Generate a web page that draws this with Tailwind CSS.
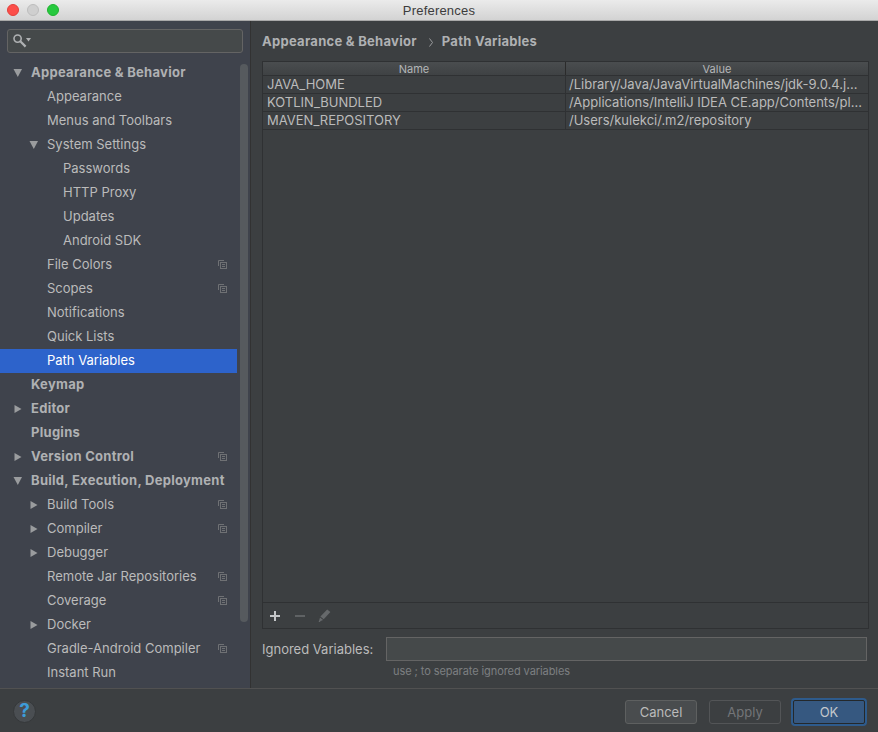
<!DOCTYPE html>
<html lang="en">
<head>
    <meta charset="UTF-8">
    <title>Preferences</title>
    <script src="https://cdn.jsdelivr.net/npm/@tailwindcss/browser@4"></script>
</head>
<body class="bg-[#3c3f41] font-['Inter','Liberation_Sans',sans-serif] text-[13px] text-[#bbbbbb] overflow-hidden">
<div class="w-[878px] h-[732px] flex flex-col overflow-hidden">

    <!-- Title bar -->
    <div class="h-[21px] shrink-0 flex items-center relative bg-gradient-to-b from-[#ebebeb] to-[#d3d3d3] border-b border-[#a9a9a9]">
        <div class="flex gap-[8px] pl-[7px]">
            <span class="w-3 h-3 rounded-full bg-[#fc4e49] border border-[#e2403b]"></span>
            <span class="w-3 h-3 rounded-full bg-[#cfcfcf] border border-[#bdbdbd]"></span>
            <span class="w-3 h-3 rounded-full bg-[#27c93f] border border-[#1fb32f]"></span>
        </div>
        <div class="absolute inset-x-0 top-0 text-center text-[13px] tracking-[0.2px] leading-[21px] text-[#3c3c3c] font-['Liberation_Sans',sans-serif]">Preferences</div>
    </div>

    <div class="h-[668px] shrink-0 flex border-b border-[#515151]">
        <!-- Sidebar -->
        <div class="w-[251px] shrink-0 bg-[#3f434c] border-r border-[#323232] relative">
            <div class="mx-[7px] mt-[8px] w-[236px] h-[24px] rounded-[3px] border border-[#646464] bg-[#45494a] flex items-center pl-[5px]">
                <svg width="19" height="14" viewBox="0 0 19 14" fill="none" stroke="#afb1b3"><circle cx="4.6" cy="4.6" r="3.6" stroke-width="1.6"/><path d="M7.3 7.3L12.6 12.6" stroke-width="2.2"/><path d="M13 4h5l-2.5 3.5z" fill="#afb1b3" stroke="none"/></svg>
            </div>

            <div class="mt-[8px] w-[237px] leading-[24px]">
                <div class="h-[24px] pb-[2px] flex items-center font-bold tracking-[0.28px] text-[#afb1b3]"><svg class="ml-[13px] mr-[8px] mt-[2px]" width="10" height="10" viewBox="0 0 10 10"><path d="M.5 1h8.5l-4.2 8z" fill="#9a9c9e"/></svg>Appearance &amp; Behavior</div>
                <div class="h-[24px] pb-[2px] flex items-center pl-[47px]">Appearance</div>
                <div class="h-[24px] pb-[2px] flex items-center pl-[47px]">Menus and Toolbars</div>
                <div class="h-[24px] pb-[2px] flex items-center"><svg class="ml-[29px] mr-[8px] mt-[2px]" width="10" height="10" viewBox="0 0 10 10"><path d="M.5 1h8.5l-4.2 8z" fill="#9a9c9e"/></svg>System Settings</div>
                <div class="h-[24px] pb-[2px] flex items-center pl-[63px]">Passwords</div>
                <div class="h-[24px] pb-[2px] flex items-center pl-[63px]">HTTP Proxy</div>
                <div class="h-[24px] pb-[2px] flex items-center pl-[63px]">Updates</div>
                <div class="h-[24px] pb-[2px] flex items-center pl-[63px]">Android SDK</div>
                <div class="h-[24px] pb-[2px] flex items-center justify-between pl-[47px] pr-[10px]">File Colors<svg width="9" height="9" viewBox="0 0 9 9" fill="none" stroke="#6f7174"><path d="M.5 6V.5H6"/><rect x="2.5" y="2.5" width="6" height="6"/><path d="M4 4.5h3M4 6.5h3"/></svg></div>
                <div class="h-[24px] pb-[2px] flex items-center justify-between pl-[47px] pr-[10px]">Scopes<svg width="9" height="9" viewBox="0 0 9 9" fill="none" stroke="#6f7174"><path d="M.5 6V.5H6"/><rect x="2.5" y="2.5" width="6" height="6"/><path d="M4 4.5h3M4 6.5h3"/></svg></div>
                <div class="h-[24px] pb-[2px] flex items-center pl-[47px]">Notifications</div>
                <div class="h-[24px] pb-[2px] flex items-center pl-[47px]">Quick Lists</div>
                <div class="h-[24px] pb-[2px] flex items-center pl-[47px] bg-[#2d63cb] text-white">Path Variables</div>
                <div class="h-[24px] pb-[2px] flex items-center pl-[31px] font-bold tracking-[0.28px] text-[#afb1b3]">Keymap</div>
                <div class="h-[24px] pb-[2px] flex items-center font-bold tracking-[0.28px] text-[#afb1b3]"><svg class="ml-[13px] mr-[8px] mt-[2px]" width="10" height="10" viewBox="0 0 10 10"><path d="M1.5 1l7 4-7 4z" fill="#9a9c9e"/></svg>Editor</div>
                <div class="h-[24px] pb-[2px] flex items-center pl-[31px] font-bold tracking-[0.28px] text-[#afb1b3]">Plugins</div>
                <div class="h-[24px] pb-[2px] flex items-center font-bold tracking-[0.28px] text-[#afb1b3] pr-[10px]"><svg class="ml-[13px] mr-[8px] mt-[2px]" width="10" height="10" viewBox="0 0 10 10"><path d="M1.5 1l7 4-7 4z" fill="#9a9c9e"/></svg>Version Control<svg class="ml-auto" width="9" height="9" viewBox="0 0 9 9" fill="none" stroke="#6f7174"><path d="M.5 6V.5H6"/><rect x="2.5" y="2.5" width="6" height="6"/><path d="M4 4.5h3M4 6.5h3"/></svg></div>
                <div class="h-[24px] pb-[2px] flex items-center font-bold tracking-[0.28px] text-[#afb1b3]"><svg class="ml-[13px] mr-[8px] mt-[2px]" width="10" height="10" viewBox="0 0 10 10"><path d="M.5 1h8.5l-4.2 8z" fill="#9a9c9e"/></svg>Build, Execution, Deployment</div>
                <div class="h-[24px] pb-[2px] flex items-center pr-[10px]"><svg class="ml-[29px] mr-[8px] mt-[2px]" width="10" height="10" viewBox="0 0 10 10"><path d="M1.5 1l7 4-7 4z" fill="#9a9c9e"/></svg>Build Tools<svg class="ml-auto" width="9" height="9" viewBox="0 0 9 9" fill="none" stroke="#6f7174"><path d="M.5 6V.5H6"/><rect x="2.5" y="2.5" width="6" height="6"/><path d="M4 4.5h3M4 6.5h3"/></svg></div>
                <div class="h-[24px] pb-[2px] flex items-center pr-[10px]"><svg class="ml-[29px] mr-[8px] mt-[2px]" width="10" height="10" viewBox="0 0 10 10"><path d="M1.5 1l7 4-7 4z" fill="#9a9c9e"/></svg>Compiler<svg class="ml-auto" width="9" height="9" viewBox="0 0 9 9" fill="none" stroke="#6f7174"><path d="M.5 6V.5H6"/><rect x="2.5" y="2.5" width="6" height="6"/><path d="M4 4.5h3M4 6.5h3"/></svg></div>
                <div class="h-[24px] pb-[2px] flex items-center"><svg class="ml-[29px] mr-[8px] mt-[2px]" width="10" height="10" viewBox="0 0 10 10"><path d="M1.5 1l7 4-7 4z" fill="#9a9c9e"/></svg>Debugger</div>
                <div class="h-[24px] pb-[2px] flex items-center justify-between pl-[47px] pr-[10px]">Remote Jar Repositories<svg width="9" height="9" viewBox="0 0 9 9" fill="none" stroke="#6f7174"><path d="M.5 6V.5H6"/><rect x="2.5" y="2.5" width="6" height="6"/><path d="M4 4.5h3M4 6.5h3"/></svg></div>
                <div class="h-[24px] pb-[2px] flex items-center justify-between pl-[47px] pr-[10px]">Coverage<svg width="9" height="9" viewBox="0 0 9 9" fill="none" stroke="#6f7174"><path d="M.5 6V.5H6"/><rect x="2.5" y="2.5" width="6" height="6"/><path d="M4 4.5h3M4 6.5h3"/></svg></div>
                <div class="h-[24px] pb-[2px] flex items-center"><svg class="ml-[29px] mr-[8px] mt-[2px]" width="10" height="10" viewBox="0 0 10 10"><path d="M1.5 1l7 4-7 4z" fill="#9a9c9e"/></svg>Docker</div>
                <div class="h-[24px] pb-[2px] flex items-center justify-between pl-[47px] pr-[10px]">Gradle-Android Compiler<svg width="9" height="9" viewBox="0 0 9 9" fill="none" stroke="#6f7174"><path d="M.5 6V.5H6"/><rect x="2.5" y="2.5" width="6" height="6"/><path d="M4 4.5h3M4 6.5h3"/></svg></div>
                <div class="h-[24px] pb-[2px] flex items-center pl-[47px]">Instant Run</div>
            </div>

            <!-- Scrollbar thumb -->
            <div class="absolute left-[240px] top-[43px] w-[8px] h-[558px] rounded-full bg-[#565a5e]"></div>
        </div>

        <!-- Main panel -->
        <div class="flex-1 min-w-0 pl-[11px] pr-[9px] flex flex-col">
            <div class="h-[40px] pt-[2px] flex items-center font-bold tracking-[0.28px] text-[#afb1b3] shrink-0">Appearance &amp; Behavior<svg class="ml-[12px] mr-[9px]" width="4" height="9" viewBox="0 0 4 9" fill="none" stroke="#9a9c9e"><path d="M.5.5l3 4-3 4"/></svg>Path Variables</div>

            <div class="h-[568px] shrink-0 border border-[#2f3133] flex flex-col">
                <div class="flex-1 min-h-0 text-[13px] leading-[17px]">
                    <div class="flex h-[13px] text-[11px] leading-[15px] text-[#b4b6b8] bg-gradient-to-b from-[#4a4d4f] to-[#3f4244] border-b border-[#2f3133] box-content">
                        <div class="w-[303px] text-center border-r border-[#2b2b2b]">Name</div>
                        <div class="flex-1 text-center">Value</div>
                    </div>
                    <div class="flex h-[18px] border-b border-[#2f3133]">
                        <div class="w-[303px] pl-[4px] border-r border-[#2f3133]">JAVA_HOME</div>
                        <div class="flex-1 pl-[3px]">/Library/Java/JavaVirtualMachines/jdk-9.0.4.j...</div>
                    </div>
                    <div class="flex h-[18px] border-b border-[#2f3133]">
                        <div class="w-[303px] pl-[4px] border-r border-[#2f3133]">KOTLIN_BUNDLED</div>
                        <div class="flex-1 pl-[3px]">/Applications/IntelliJ IDEA CE.app/Contents/pl...</div>
                    </div>
                    <div class="flex h-[18px] border-b border-[#2f3133]">
                        <div class="w-[303px] pl-[4px] border-r border-[#2f3133]">MAVEN_REPOSITORY</div>
                        <div class="flex-1 pl-[3px]">/Users/kulekci/.m2/repository</div>
                    </div>
                </div>
                <div class="h-[26px] shrink-0 border-t border-[#2f3133] flex items-center pl-[6px] gap-[13px]">
                    <svg width="12" height="12" viewBox="0 0 12 12"><path d="M6 1v10M1 6h10" stroke="#c4c6c8" stroke-width="2"/></svg>
                    <svg width="12" height="12" viewBox="0 0 12 12"><path d="M1 6h10" stroke="#5f6264" stroke-width="2"/></svg>
                    <svg class="ml-[-1px]" width="13" height="13" viewBox="0 0 13 13"><path d="M9.2.5l3.2 2.6-6.7 7.2-3.3-2.7zM2 8.6l3.1 2.5-2.4.9-.9 1H.6l.5-1.2z" fill="#66696b"/></svg>
                </div>
            </div>

            <div class="flex items-center mt-[8px] h-[24px] shrink-0">
                <span class="w-[124px] pt-[1px]">Ignored Variables:</span>
                <div class="w-[481px] h-[24px] border border-[#646464] bg-[#45494a]"></div>
            </div>
            <div class="pl-[131px] mt-[3px] text-[11px] tracking-[-0.08px] leading-[14px] text-[#7c7f81]">use ; to separate ignored variables</div>
        </div>
    </div>

    <!-- Footer -->
    <div class="flex-1 flex items-start justify-between pl-[13px] pr-[11px] pt-[9px] bg-[#3c3f41]">
        <div class="w-[23px] h-[23px] mt-[2px] rounded-full bg-[#4a4e52] border border-[#35383a] flex items-center justify-center text-[19px] font-bold text-[#3d9bd8]">?</div>
        <div class="flex items-center">
            <div class="w-[72px] h-[24px] pt-[1px] rounded-[3px] border border-[#5e6060] bg-[#494c4e] flex items-center justify-center">Cancel</div>
            <div class="w-[72px] h-[24px] pt-[1px] ml-[12px] rounded-[3px] border border-[#535557] flex items-center justify-center text-[#737578]">Apply</div>
            <div class="w-[76px] h-[28px] pt-[1px] ml-[10px] rounded-[4px] border-2 border-[#2e5b8c] outline outline-1 -outline-offset-3 outline-[#24282b] bg-[#365880] flex items-center justify-center text-[#c4c8cc]">OK</div>
        </div>
    </div>
</div>
</body>
</html>
